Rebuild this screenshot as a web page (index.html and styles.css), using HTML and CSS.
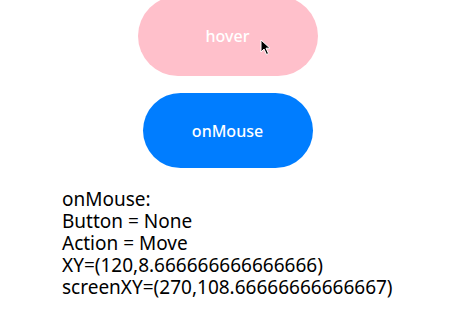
FILE: index.html
```html
<!DOCTYPE html>
<html>
<head>
<meta charset="utf-8">
<link rel="stylesheet" href="styles.css">
</head>
<body>
<div class="page">
  <div class="buttons">
    <div class="btn btn-hover">hover
      <svg class="cursor" width="12" height="17" viewBox="0 0 12 17"><path d="M1 1 L1 13 L4 10 L6.5 15.5 L8.5 14.5 L6 9.2 L10 9.2 Z" fill="#000" stroke="#fff" stroke-width="1"/></svg>
    </div>
    <div class="btn btn-mouse">onMouse</div>
  </div>
  <div class="info">
    <div>onMouse:</div>
    <div>Button = None</div>
    <div>Action = Move</div>
    <div>XY=(120,8.666666666666666)</div>
    <div>screenXY=(270,108.66666666666667)</div>
  </div>
</div>
</body>
</html>
```

FILE: styles.css
```css
html, body {
  margin: 0;
  padding: 0;
  background: #fff;
  overflow: hidden;
}
.page {
  width: 455px;
  height: 327px;
  font-family: "Noto Sans", sans-serif;
}
.buttons {
  display: flex;
  flex-direction: column;
  align-items: center;
  gap: 17px;
  margin-top: -4px;
}
.btn {
  display: flex;
  align-items: center;
  justify-content: center;
  color: #fff;
  font-size: 16px;
  font-weight: 500;
  border-radius: 40px;
}
.btn-hover {
  position: relative;
  width: 180px;
  height: 80px;
  background: #ffc0cb;
}
.btn-mouse {
  width: 170px;
  height: 75px;
  background: #007dff;
}
.cursor {
  position: absolute;
  left: 122px;
  top: 43px;
}
.info {
  margin: 20px 0 0 62px;
  font-size: 19px;
  line-height: 22px;
  color: #000;
}
```
